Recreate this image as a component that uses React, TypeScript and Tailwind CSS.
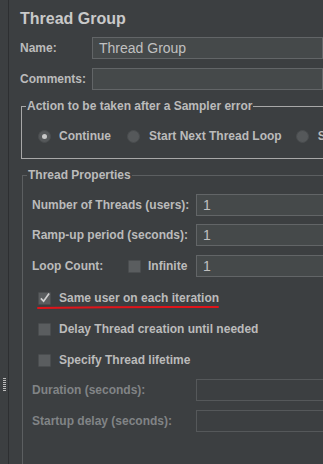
import React from "react";

const Radio = ({ checked }: { checked?: boolean }) => (
  <span className="w-[13px] h-[13px] rounded-full bg-[#55585a] border border-[#4a4d4f] flex items-center justify-center shrink-0">
    {checked && <span className="w-[5px] h-[5px] rounded-full bg-[#c8c8c8]" />}
  </span>
);

const Check = ({ checked }: { checked?: boolean }) => (
  <span className="w-[13px] h-[13px] bg-[#5a5d5f] border border-[#4a4d4f] flex items-center justify-center shrink-0 rounded-[1px]">
    {checked && (
      <svg width="12" height="12" viewBox="0 0 12 12">
        <path d="M2 6.5 L5 9.5 L11 1" stroke="#d0d0d0" strokeWidth="1.8" fill="none" />
      </svg>
    )}
  </span>
);

const Input = ({ value, disabled }: { value?: string; disabled?: boolean }) => (
  <div
    className={`h-[22px] flex-1 flex items-center pl-[6px] text-[14px] font-normal ${
      disabled ? "border border-[#55585a] bg-[#3c3f41]" : "border border-[#626567] bg-[#45494a] text-[#c0c0c0]"
    }`}
  >
    {value}
  </div>
);

export default function App() {
  return (
    <div
      className="w-[323px] h-[464px] bg-[#3c3f41] flex overflow-hidden text-[#bbbbbb] whitespace-nowrap"
      style={{ fontFamily: '"Liberation Sans", Arial, sans-serif' }}
    >
      <div className="w-[9px] shrink-0 border-r border-[#2d2f31] flex flex-col items-center justify-end pb-[73px]">
        <div className="w-[3px] h-[13px] bg-[repeating-linear-gradient(0deg,#bbbbbb_0,#bbbbbb_1px,transparent_1px,transparent_2px)]" />
      </div>
      <div className="flex-1 min-w-0 pl-[11px] pt-[8px] flex flex-col">
        <div className="text-[16px] font-bold text-[#c9c9c9] leading-[22px]">Thread Group</div>
        <div className="flex items-center mt-[7px] text-[12px] font-bold w-[303px]">
          <div className="w-[72px]">Name:</div>
          <Input value="Thread Group" />
        </div>
        <div className="flex items-center mt-[9px] text-[12px] font-bold w-[303px]">
          <div className="w-[72px]">Comments:</div>
          <Input />
        </div>
        <fieldset className="mt-[8px] ml-[1px] w-[360px] shrink-0 border border-[#a8a8a8] p-0">
          <legend className="ml-[4px] px-[1px] text-[12px] font-bold text-[#bbbbbb] leading-[16px]">
            Action to be taken after a Sampler error
          </legend>
          <div className="flex items-center text-[12px] font-bold pl-[16px] pb-[13px] pt-[13px]">
            <Radio checked />
            <span className="ml-[8px]">Continue</span>
            <span className="ml-[16px]"><Radio /></span>
            <span className="ml-[9px]">Start Next Thread Loop</span>
            <span className="ml-[14px]"><Radio /></span>
            <span className="ml-[9px]">Start Next Thread Loop Immediately</span>
          </div>
        </fieldset>
        <fieldset className="mt-[8px] ml-[2px] w-[360px] shrink-0 border border-[#5c5f61] p-0 h-[400px]">
          <legend className="ml-[4px] px-[1px] text-[12px] font-bold text-[#bbbbbb] leading-[16px]">
            Thread Properties
          </legend>
          <div className="flex flex-col text-[12px] font-bold w-[310px] pl-[9px] pt-[11px]">
            <div className="flex items-center">
              <div className="w-[164px]">Number of Threads (users):</div>
              <Input value="1" />
            </div>
            <div className="flex items-center mt-[8px]">
              <div className="w-[164px]">Ramp-up period (seconds):</div>
              <Input value="1" />
            </div>
            <div className="flex items-center mt-[9px]">
              <div className="w-[96px]">Loop Count:</div>
              <Check />
              <div className="w-[48px] ml-[7px]">Infinite</div>
              <Input value="1" />
            </div>
            <div className="relative flex items-center mt-[12px] ml-[6px] h-[18px]">
              <Check checked />
              <span className="ml-[8px]">Same user on each iteration</span>
              <svg className="absolute left-[-1px] top-[16px]" width="182" height="5" viewBox="0 0 182 5">
                <path d="M1 3 Q 90 1.5 181 2" stroke="#e0141a" strokeWidth="2" fill="none" strokeLinecap="round" />
              </svg>
            </div>
            <div className="flex items-center mt-[13px] ml-[6px] h-[18px]">
              <Check />
              <span className="ml-[8px]">Delay Thread creation until needed</span>
            </div>
            <div className="flex items-center mt-[13px] ml-[6px] h-[18px]">
              <Check />
              <span className="ml-[8px]">Specify Thread lifetime</span>
            </div>
            <div className="flex items-center mt-[10px] text-[#818486]">
              <div className="w-[164px]">Duration (seconds):</div>
              <Input disabled />
            </div>
            <div className="flex items-center mt-[9px] text-[#818486]">
              <div className="w-[164px]">Startup delay (seconds):</div>
              <Input disabled />
            </div>
          </div>
        </fieldset>
      </div>
    </div>
  );
}
